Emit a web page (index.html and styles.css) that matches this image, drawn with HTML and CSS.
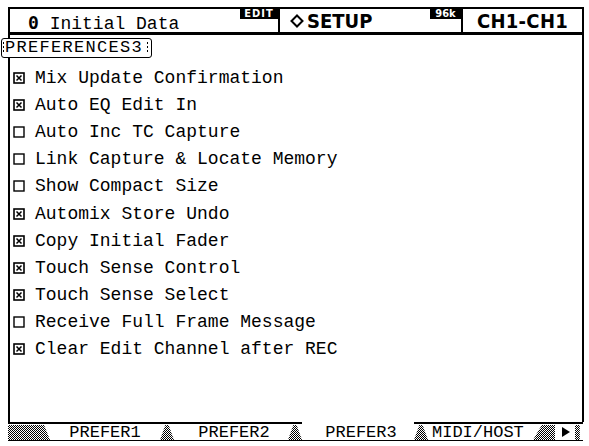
FILE: index.html
```html
<!DOCTYPE html>
<html>
<head>
<meta charset="utf-8">
<link rel="stylesheet" href="styles.css">
</head>
<body>
<div class="screen">
  <div class="header">
    <div class="cell cell-title">
      <span class="title"><b class="zero">0</b> Initial Data</span>
      <span class="badge badge-edit">EDIT</span>
    </div>
    <div class="cell cell-setup">
      <span class="setup"><svg class="diamond" width="14" height="14" viewBox="0 0 14 14"><path d="M7 1.5 L12.5 7 L7 12.5 L1.5 7 Z" fill="none" stroke="#000" stroke-width="2"/></svg>SETUP</span>
      <span class="badge badge-96k">96k</span>
    </div>
    <div class="cell cell-ch">CH1-CH1</div>
  </div>
  <div class="body">
    <div class="label">PREFERENCES3</div>
    <ul class="list">
      <li class="item"><svg class="box" width="12" height="12" viewBox="0 0 12 12"><rect x="1" y="1" width="10" height="10" fill="none" stroke="#000" stroke-width="1.6"/><path d="M3.5 3.5 L8.5 8.5 M8.5 3.5 L3.5 8.5" stroke="#000" stroke-width="1.5"/></svg><span>Mix Update Confirmation</span></li>
      <li class="item"><svg class="box" width="12" height="12" viewBox="0 0 12 12"><rect x="1" y="1" width="10" height="10" fill="none" stroke="#000" stroke-width="1.6"/><path d="M3.5 3.5 L8.5 8.5 M8.5 3.5 L3.5 8.5" stroke="#000" stroke-width="1.5"/></svg><span>Auto EQ Edit In</span></li>
      <li class="item"><svg class="box" width="12" height="12" viewBox="0 0 12 12"><rect x="1" y="1" width="10" height="10" fill="none" stroke="#000" stroke-width="1.4"/></svg><span>Auto Inc TC Capture</span></li>
      <li class="item"><svg class="box" width="12" height="12" viewBox="0 0 12 12"><rect x="1" y="1" width="10" height="10" fill="none" stroke="#000" stroke-width="1.4"/></svg><span>Link Capture &amp; Locate Memory</span></li>
      <li class="item"><svg class="box" width="12" height="12" viewBox="0 0 12 12"><rect x="1" y="1" width="10" height="10" fill="none" stroke="#000" stroke-width="1.4"/></svg><span>Show Compact Size</span></li>
      <li class="item"><svg class="box" width="12" height="12" viewBox="0 0 12 12"><rect x="1" y="1" width="10" height="10" fill="none" stroke="#000" stroke-width="1.6"/><path d="M3.5 3.5 L8.5 8.5 M8.5 3.5 L3.5 8.5" stroke="#000" stroke-width="1.5"/></svg><span>Automix Store Undo</span></li>
      <li class="item"><svg class="box" width="12" height="12" viewBox="0 0 12 12"><rect x="1" y="1" width="10" height="10" fill="none" stroke="#000" stroke-width="1.6"/><path d="M3.5 3.5 L8.5 8.5 M8.5 3.5 L3.5 8.5" stroke="#000" stroke-width="1.5"/></svg><span>Copy Initial Fader</span></li>
      <li class="item"><svg class="box" width="12" height="12" viewBox="0 0 12 12"><rect x="1" y="1" width="10" height="10" fill="none" stroke="#000" stroke-width="1.6"/><path d="M3.5 3.5 L8.5 8.5 M8.5 3.5 L3.5 8.5" stroke="#000" stroke-width="1.5"/></svg><span>Touch Sense Control</span></li>
      <li class="item"><svg class="box" width="12" height="12" viewBox="0 0 12 12"><rect x="1" y="1" width="10" height="10" fill="none" stroke="#000" stroke-width="1.6"/><path d="M3.5 3.5 L8.5 8.5 M8.5 3.5 L3.5 8.5" stroke="#000" stroke-width="1.5"/></svg><span>Touch Sense Select</span></li>
      <li class="item"><svg class="box" width="12" height="12" viewBox="0 0 12 12"><rect x="1" y="1" width="10" height="10" fill="none" stroke="#000" stroke-width="1.4"/></svg><span>Receive Full Frame Message</span></li>
      <li class="item"><svg class="box" width="12" height="12" viewBox="0 0 12 12"><rect x="1" y="1" width="10" height="10" fill="none" stroke="#000" stroke-width="1.6"/><path d="M3.5 3.5 L8.5 8.5 M8.5 3.5 L3.5 8.5" stroke="#000" stroke-width="1.5"/></svg><span>Clear Edit Channel after REC</span></li>
    </ul>
  </div>
  <div class="tabs">
    <div class="fill fill-left"><span class="dither dither-left"></span></div>
    <div class="tab">PREFER1</div>
    <div class="sep"><span class="dither dither-sep"></span></div>
    <div class="tab tab-2">PREFER2</div>
    <div class="sep"><span class="dither dither-sep"></span></div>
    <div class="tab tab-active">PREFER3</div>
    <div class="sep"><span class="dither dither-sep"></span></div>
    <div class="tab tab-midi">MIDI/HOST</div>
    <div class="fill fill-mid"><span class="dither dither-mid"></span></div>
    <div class="tab tab-arrow"><svg width="9" height="10" viewBox="0 0 9 10"><path d="M1 0 L9 5 L1 10 Z" fill="#000"/></svg></div>
    <div class="fill fill-end"><span class="dither dither-end"></span></div>
  </div>
</div>
</body>
</html>
```

FILE: styles.css
```css
html, body {
  margin: 0;
  padding: 0;
  background: #fff;
}

body {
  font-family: "Liberation Mono", "DejaVu Sans Mono", monospace;
  color: #000;
}

.screen {
  width: 576px;
  height: 434px;
  margin: 7px 0 0 8px;
  display: flex;
  flex-direction: column;
}

/* header */
.header {
  display: flex;
  height: 23px;
  border: 2px solid #000;
  border-bottom-width: 3px;
}

.cell {
  display: flex;
  align-items: flex-start;
  height: 23px;
}

.cell-title {
  width: 268px;
  justify-content: space-between;
  border-right: 2px solid #000;
}

.cell-setup {
  width: 181px;
  justify-content: space-between;
  border-right: 2px solid #000;
}

.cell-ch {
  width: 119px;
  justify-content: center;
  font-family: "DejaVu Sans Condensed", "DejaVu Sans", sans-serif;
  font-stretch: condensed;
  font-weight: bold;
  font-size: 20px;
  line-height: 24px;
  letter-spacing: 0.3px;
}

.title {
  padding-left: 18px;
  font-size: 18px;
  line-height: 23px;
  padding-top: 2px;
  white-space: pre;
}

.zero {
  font-family: "DejaVu Sans Mono", monospace;
  font-weight: bold;
}

.badge {
  background: #000;
  color: #fff;
  font-family: "DejaVu Sans Condensed", "DejaVu Sans", sans-serif;
  font-stretch: condensed;
  font-weight: bold;
  font-size: 11px;
  line-height: 10px;
  height: 10px;
  text-align: center;
}

.badge-edit {
  width: 38px;
  letter-spacing: 1px;
}

.badge-96k {
  width: 31px;
}

.setup {
  display: flex;
  align-items: center;
  gap: 3px;
  padding-left: 10px;
  height: 24px;
  font-family: "DejaVu Sans Condensed", "DejaVu Sans", sans-serif;
  font-stretch: condensed;
  font-weight: bold;
  font-size: 20px;
  line-height: 24px;
}

.diamond {
  display: block;
}

/* body */
.body {
  flex: 1;
  border-left: 2px solid #000;
  border-right: 2px solid #000;
  display: flex;
  flex-direction: column;
  align-items: flex-start;
}

.label {
  margin: 3px 0 0 -9px;
  width: 146px;
  height: 18px;
  border: 1px solid #000;
  border-radius: 3px;
  padding-left: 3px;
  font-size: 17px;
  line-height: 18px;
  letter-spacing: 1.3px;
  background: #fff;
  position: relative;
}

.label::before,
.label::after {
  content: "";
  position: absolute;
  top: 3px;
  bottom: 3px;
  width: 1px;
  background: repeating-linear-gradient(#000 0 2px, transparent 2px 4px);
}

.label::before { left: 1px; }
.label::after { right: 3px; }

.list {
  list-style: none;
  margin: 6px 0 0;
  padding: 0 0 0 3px;
}

.item {
  display: flex;
  align-items: center;
  height: 27.2px;
  gap: 10px;
  font-size: 18px;
  white-space: pre;
}

.box {
  display: block;
  flex: none;
}

/* tabs */
.tabs {
  display: flex;
  height: 19px;
  font-size: 17px;
  line-height: 17px;
}

.tabs > div {
  box-sizing: border-box;
  height: 19px;
  border-top: 2px solid #000;
  border-bottom: 1px solid #000;
}

.tab {
  text-align: center;
  white-space: pre;
}

.tabs > .tab-active {
  border-top-color: transparent;
}

.tab:nth-child(2) { width: 110px; padding-left: 0; }
.tab-2 { width: 114px; padding-left: 6px; }
.tab-active { width: 112px; padding-left: 6px; }
.tab-midi { width: 105px; text-align: left; padding-left: 4px; }
.tab-arrow {
  width: 20px;
  display: flex;
  align-items: center;
  justify-content: center;
}

.fill, .sep {
  position: relative;
}

.fill-left { width: 42px; }
.sep { width: 14px; }
.fill-mid { width: 22px; }
.fill-end { width: 8px; }

.dither {
  position: absolute;
  left: 0;
  right: 0;
  top: 1px;
  bottom: 0;
  background: repeating-conic-gradient(#000 0 25%, #fff 0 50%) 0 0 / 2px 2px;
}

.dither-left {
  clip-path: polygon(0 0, 86% 0, 100% 100%, 0 100%);
}

.dither-sep {
  clip-path: polygon(38% 0, 62% 0, 100% 100%, 0 100%);
}

.dither-mid {
  clip-path: polygon(40% 0, 100% 0, 100% 100%, 0 100%);
}

.dither-end {
  clip-path: polygon(0 0, 60% 0, 60% 100%, 0 100%);
}
```
